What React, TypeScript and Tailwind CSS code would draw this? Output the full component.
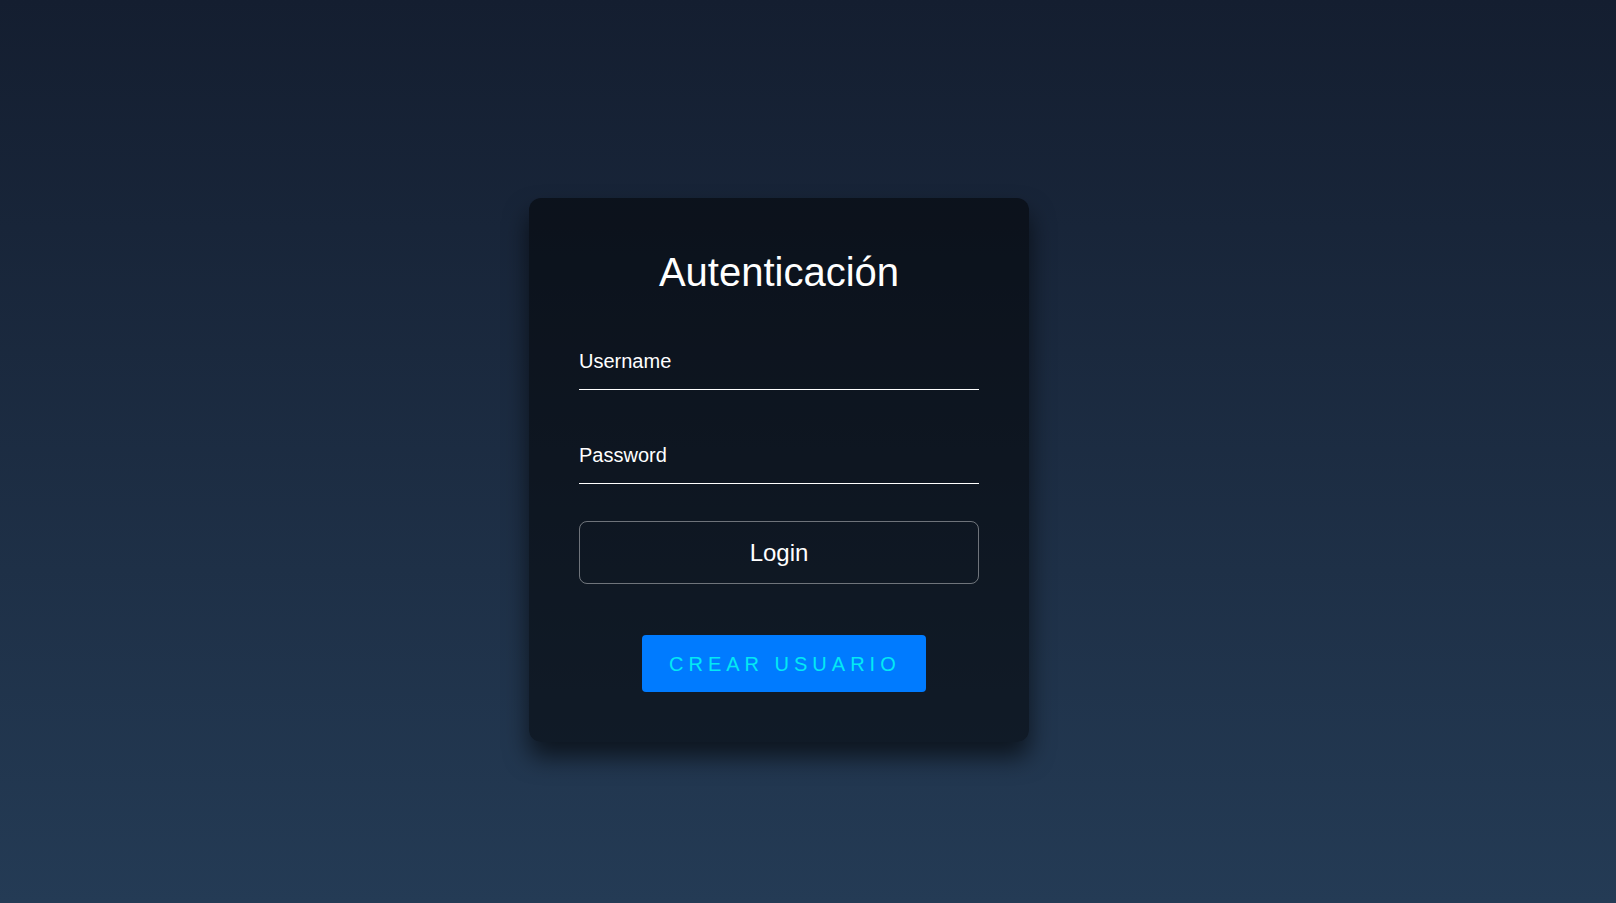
function Field({ label, type }: { label: string; type: string }) {
  return (
    <div className="border-b border-white pb-4">
      <input
        type={type}
        placeholder={label}
        className="block h-6 w-full bg-transparent text-[20px] leading-6 text-white outline-none placeholder:text-white"
      />
    </div>
  )
}

function App() {
  return (
    <div className="flex min-h-screen w-full justify-center bg-linear-to-b from-[#141e30] to-[#243b55] pt-[198px] font-['Liberation_Sans',Arial,sans-serif]">
      {/* Login card */}
      <div className="mr-[58px] flex h-[544px] w-[500px] flex-col rounded-xl bg-black/50 p-[50px] shadow-[0_15px_25px_rgba(0,0,0,0.6)]">
        <h2 className="text-center text-[40px] leading-[48px] text-white">Autenticación</h2>

        <div className="mt-[53px] flex flex-col gap-[53px]">
          <Field label="Username" type="text" />
          <Field label="Password" type="password" />
        </div>

        <button className="mt-[37px] h-[64px] w-full rounded-lg border border-white/40 text-[24px] text-white">
          Login
        </button>

        <button className="mt-[51px] ml-[63px] h-[57px] w-[284px] shrink-0 rounded bg-[#007bff] pl-[27px] text-left text-[20px] tracking-[5px] text-[#03e9f4]">
          CREAR USUARIO
        </button>
      </div>
    </div>
  )
}

export default App
